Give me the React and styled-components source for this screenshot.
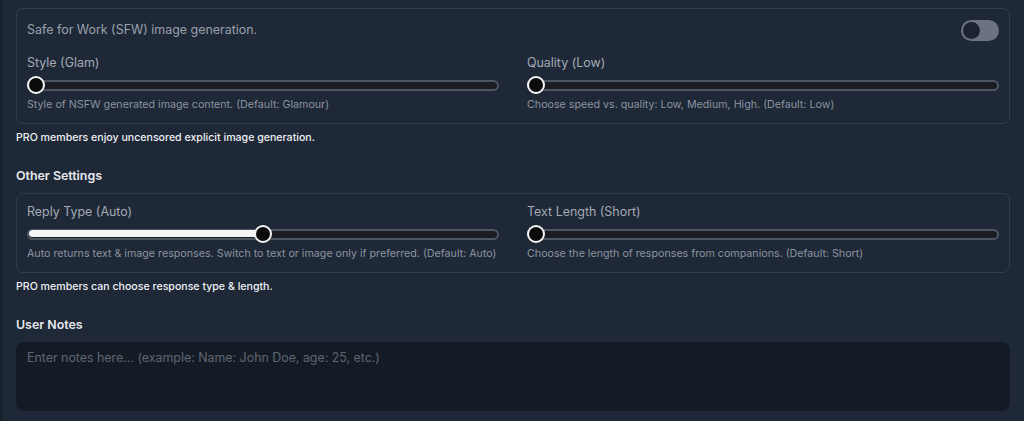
import React from 'react'
import styled, { createGlobalStyle } from 'styled-components'

const GlobalStyle = createGlobalStyle`
  html, body {
    margin: 0;
    padding: 0;
    background: #1e2837;
  }
  body {
    font-family: Inter, "Noto Sans", sans-serif;
    -webkit-font-smoothing: antialiased;
  }
`

function Slider({ value }) {
  return (
    <Track>
      <Fill style={{ width: `calc(${value}% - ${value * 0.18}px + 9px)` }} $show={value > 0} />
      <Thumb style={{ left: `calc(${value}% - ${value * 0.18}px)` }} />
    </Track>
  )
}

function Setting({ label, value, desc }) {
  return (
    <Field>
      <Label>{label}</Label>
      <Slider value={value} />
      <Desc>{desc}</Desc>
    </Field>
  )
}

function App() {
  return (
    <Page>
      <GlobalStyle />
      <Card>
        <HeaderRow>
          <CardTitle>Safe for Work (SFW) image generation.</CardTitle>
          <Toggle>
            <Knob />
          </Toggle>
        </HeaderRow>
        <Columns>
          <Setting label="Style (Glam)" value={0} desc="Style of NSFW generated image content. (Default: Glamour)" />
          <Setting label="Quality (Low)" value={0} desc="Choose speed vs. quality: Low, Medium, High. (Default: Low)" />
        </Columns>
      </Card>
      <Note>PRO members enjoy uncensored explicit image generation.</Note>

      <Heading>Other Settings</Heading>
      <Card>
        <Columns>
          <Setting label="Reply Type (Auto)" value={50} desc="Auto returns text & image responses. Switch to text or image only if preferred. (Default: Auto)" />
          <Setting label="Text Length (Short)" value={0} desc="Choose the length of responses from companions. (Default: Short)" />
        </Columns>
      </Card>
      <Note>PRO members can choose response type &amp; length.</Note>

      <Heading>User Notes</Heading>
      <Notes placeholder="Enter notes here... (example: Name: John Doe, age: 25, etc.)" />
    </Page>
  )
}

export default App

const Page = styled.div`
  min-height: 421px;
  box-sizing: border-box;
  padding: 8px 14px 0 13px;
  border-left: 3px solid #18202c;
  display: flex;
  flex-direction: column;
`

const Card = styled.div`
  border: 1px solid #323c4c;
  border-radius: 7px;
  padding: 10px 10px 11px;
  display: flex;
  flex-direction: column;
  gap: 14px;
`

const HeaderRow = styled.div`
  display: flex;
  justify-content: space-between;
  align-items: center;
  height: 22px;
`

const CardTitle = styled.div`
  font-size: 12.45px;
  line-height: 16px;
  color: #9aa1ad;
`

const Toggle = styled.div`
  width: 38px;
  height: 21px;
  border-radius: 11px;
  background: #6b7280;
  display: flex;
  align-items: center;
  padding: 0 2px;
  box-sizing: border-box;
`

const Knob = styled.div`
  width: 17px;
  height: 17px;
  border-radius: 50%;
  background: #1b2331;
`

const Columns = styled.div`
  display: grid;
  grid-template-columns: 1fr 1fr;
  column-gap: 28px;
`

const Field = styled.div`
  display: flex;
  flex-direction: column;
`

const Label = styled.div`
  font-size: 12.45px;
  line-height: 16px;
  color: #a3aab5;
  margin-bottom: 5px;
`

const Track = styled.div`
  position: relative;
  height: 18px;
  display: flex;
  align-items: center;
  &::before {
    content: '';
    flex: 1;
    height: 11px;
    border-radius: 6px;
    border: 2px solid #4d5563;
    background: #1b1c1f;
    box-sizing: border-box;
  }
`

const Fill = styled.div`
  display: ${p => (p.$show ? 'block' : 'none')};
  position: absolute;
  left: 2px;
  top: 5px;
  height: 7px;
  border-radius: 4px;
  background: #f4f5f7;
`

const Thumb = styled.div`
  position: absolute;
  top: 0;
  width: 18px;
  height: 18px;
  box-sizing: border-box;
  border-radius: 50%;
  border: 2px solid #f4f5f7;
  background: #0b0b0c;
`

const Desc = styled.div`
  font-size: 10.7px;
  line-height: 14px;
  color: #8c93a0;
  margin-top: 4px;
  white-space: nowrap;
`

const Note = styled.div`
  font-size: 10.6px;
  line-height: 14px;
  font-weight: 500;
  color: #eef0f3;
  margin-top: 7px;
`

const Heading = styled.div`
  font-size: 12.4px;
  line-height: 16px;
  font-weight: 600;
  color: #e6e8ec;
  margin-top: 23px;
  margin-bottom: 9px;
`

const Notes = styled.textarea`
  display: block;
  height: 69px;
  box-sizing: border-box;
  resize: none;
  border: none;
  outline: none;
  border-radius: 8px;
  background: #151b25;
  padding: 8px 11px;
  font-family: Inter, "Noto Sans", sans-serif;
  font-size: 12.4px;
  line-height: 16px;
  color: #e5e7eb;
  &::placeholder {
    color: #5f6673;
  }
`
